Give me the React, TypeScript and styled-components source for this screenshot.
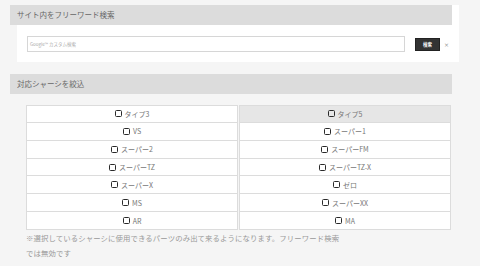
import React from "react";
import styled, { createGlobalStyle } from "styled-components";

const Global = createGlobalStyle`
  html, body { margin: 0; padding: 0; background: #f5f5f5; }
  body { font-family: "Noto Sans CJK JP", "Noto Sans", sans-serif; color: #666; }
  * { box-sizing: border-box; }
`;

const Page = styled.div`
  padding: 5px 0 0 10px;
  width: 480px;
  height: 266px;
  overflow: hidden;
`;

const SearchBox = styled.section`
  margin-left: 7px;
  width: 442px;
  background: #fff;
  padding-bottom: 10px;
`;

const Header = styled.h2<{ $shift?: boolean }>`
  margin: 0 0 0 ${(p) => (p.$shift ? "-7px" : "0")};
  width: 442px;
  height: 20px;
  background: #dcdcdc;
  font-size: 7.5px;
  font-weight: normal;
  line-height: 20px;
  padding-left: 7px;
  color: #666;
`;

const SearchRow = styled.div`
  display: flex;
  align-items: center;
  margin-top: 11px;
  padding-left: 10px;
`;

const Input = styled.div`
  width: 378px;
  height: 16px;
  border: 1px solid #d6d6d6;
  background: #fff;
  font-size: 4.5px;
  color: #aaa;
  line-height: 14px;
  padding-left: 2px;
`;

const Button = styled.div`
  margin-left: 10px;
  width: 25px;
  height: 13px;
  background: #333;
  border: 1px solid #222;
  color: #fff;
  font-size: 4.5px;
  font-weight: bold;
  display: flex;
  align-items: center;
  justify-content: center;
`;

const Close = styled.span`
  margin-left: 4px;
  font-size: 6px;
  color: #999;
  font-family: "DejaVu Sans", sans-serif;
`;

const FilterSection = styled.section`
  margin-top: 12px;
`;

const Grid = styled.div`
  margin: 11px 0 0 16px;
  display: grid;
  grid-template-columns: 212px 212px;
  column-gap: 1px;
  grid-auto-rows: 17.86px;
`;

const Cell = styled.div<{ $active?: boolean; $first?: boolean }>`
  border: 1px solid #dcdcdc;
  border-top: ${(p) => (p.$first ? "1px solid #dcdcdc" : "none")};
  background: ${(p) => (p.$active ? "#e6e6e6" : "#fff")};
  display: flex;
  align-items: center;
  justify-content: center;
  gap: 3px;
  font-size: 7px;
  color: #777;
`;

const Box = styled.span`
  width: 7px;
  height: 7px;
  border: 1.6px solid #2a2a2a;
  border-radius: 1.5px;
  display: inline-block;
`;

const Note = styled.p`
  margin: 0 0 0 16px;
  width: 318px;
  font-size: 7.4px;
  line-height: 15px;
  color: #999;
  letter-spacing: 0.1px;
`;

const items = [
  "タイプ3", "タイプ5",
  "VS", "スーパー1",
  "スーパー2", "スーパーFM",
  "スーパーTZ", "スーパーTZ-X",
  "スーパーX", "ゼロ",
  "MS", "スーパーXX",
  "AR", "MA",
];

export default function App() {
  return (
    <Page>
      <Global />
      <SearchBox>
        <Header $shift>サイト内をフリーワード検索</Header>
        <SearchRow>
          <Input>Google™ カスタム検索</Input>
          <Button>検索</Button>
          <Close>×</Close>
        </SearchRow>
      </SearchBox>
      <FilterSection>
        <Header>対応シャーシを絞込</Header>
        <Grid>
          {items.map((t, i) => (
            <Cell key={t} $first={i < 2} $active={i === 1}>
              <Box />
              {t}
            </Cell>
          ))}
        </Grid>
        <Note>※選択しているシャーシに使用できるパーツのみ出て来るようになります。フリーワード検索では無効です</Note>
      </FilterSection>
    </Page>
  );
}
